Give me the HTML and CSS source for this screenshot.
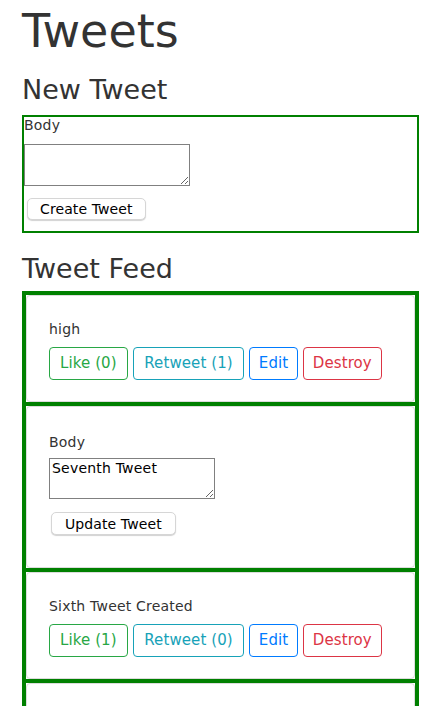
FILE: index.html
```html
<!DOCTYPE html>
<html lang="en">
<head>
<meta charset="utf-8">
<title>Tweets</title>
<link rel="stylesheet" href="styles.css">
</head>
<body>
<div class="container">
  <h1 class="title">Tweets</h1>
  <h3 class="subtitle">New Tweet</h3>
  <form class="new-form">
    <label class="new-label">Body</label>
    <textarea class="field"></textarea>
    <div class="actions"><button type="button" class="plain-btn">Create Tweet</button></div>
  </form>

  <h3 class="subtitle feed-title">Tweet Feed</h3>
  <div class="feed">
    <div class="tweet">
      <div class="card">
        <p class="tweet-text">high</p>
        <div class="btn-row">
          <button type="button" class="btn btn-like">Like (0)</button>
          <button type="button" class="btn btn-retweet">Retweet (1)</button>
          <button type="button" class="btn btn-edit">Edit</button>
          <button type="button" class="btn btn-destroy">Destroy</button>
        </div>
      </div>
    </div>
    <div class="tweet">
      <div class="card">
        <form class="edit-form">
          <label class="edit-label">Body</label>
          <textarea class="field">Seventh Tweet</textarea>
          <div class="edit-actions"><button type="button" class="plain-btn update">Update Tweet</button></div>
        </form>
      </div>
    </div>
    <div class="tweet">
      <div class="card">
        <p class="tweet-text">Sixth Tweet Created</p>
        <div class="btn-row">
          <button type="button" class="btn btn-like">Like (1)</button>
          <button type="button" class="btn btn-retweet">Retweet (0)</button>
          <button type="button" class="btn btn-edit">Edit</button>
          <button type="button" class="btn btn-destroy">Destroy</button>
        </div>
      </div>
    </div>
    <div class="tweet">
      <div class="card card-empty"></div>
    </div>
  </div>
</div>
</body>
</html>
```

FILE: styles.css
```css
html, body {
  margin: 0;
  padding: 0;
  background: #fff;
}
body {
  font-family: "DejaVu Sans", Verdana, sans-serif;
  font-size: 14px;
  letter-spacing: 0.2px;
  color: #333;
}
.container {
  padding: 6px 23px 0 22px;
}
.title {
  margin: 0 0 18px;
  font-size: 46px;
  line-height: 50px;
  letter-spacing: 0;
  font-weight: normal;
  color: #333;
}
.subtitle {
  margin: 0 0 10px;
  font-size: 27px;
  line-height: 31px;
  letter-spacing: 0;
  font-weight: normal;
  color: #333;
}
.feed-title {
  margin-top: 20px;
  margin-bottom: 7px;
}
.new-form {
  border: 2px solid #008000;
  margin: 0;
}
.new-label {
  display: block;
  line-height: 17px;
  margin-bottom: 10px;
}
.field {
  display: block;
  box-sizing: border-box;
  width: 166px;
  height: 42px;
  margin: 0;
  padding: 1px 2px;
  border: 1px solid #808080;
  font-family: "DejaVu Sans", Verdana, sans-serif;
  font-size: 14px;
  letter-spacing: 0.2px;
  line-height: 17px;
  color: #000;
  background: #fff;
}
.actions {
  padding: 12px 0 11px 3px;
}
.plain-btn {
  display: block;
  box-sizing: border-box;
  height: 22px;
  padding: 0 12px;
  border: 1px solid #d6d6d6;
  border-radius: 5px;
  background: #fff;
  box-shadow: 0 1px 1px rgba(0, 0, 0, 0.18);
  font-family: "DejaVu Sans", Verdana, sans-serif;
  font-size: 14px;
  letter-spacing: 0.1px;
  line-height: 18px;
  color: #000;
}
.plain-btn.update {
  height: 23px;
  padding: 0 13px;
}
.feed {
  border: 4px solid #008000;
}
.tweet + .tweet {
  border-top: 4px solid #008000;
}
.card {
  border: 1px solid #dcdcdc;
  border-radius: 4px;
  padding: 21px 21px 21px 22px;
  background: #fff;
}
.card-empty {
  height: 64px;
}
.tweet-text {
  margin: 0 0 6px;
  line-height: 24px;
}
.btn-row {
  display: flex;
  gap: 5px;
}
.btn {
  box-sizing: border-box;
  height: 33px;
  padding: 0 10px;
  border: 1px solid;
  border-radius: 4px;
  background: transparent;
  font-family: "DejaVu Sans", Verdana, sans-serif;
  font-size: 15px;
  letter-spacing: 0.1px;
  line-height: 31px;
}
.btn-like { color: #28a745; border-color: #28a745; }
.btn-retweet { color: #17a2b8; border-color: #17a2b8; padding: 0 10.5px; }
.btn-edit { color: #007bff; border-color: #007bff; padding: 0 8.5px; }
.btn-destroy { color: #dc3545; border-color: #dc3545; padding: 0 9px; }
.edit-form {
  margin: 0;
}
.edit-label {
  display: block;
  margin-top: 2px;
  margin-bottom: 4px;
  line-height: 24px;
}
.edit-form .field {
  height: 41px;
}
.edit-actions {
  padding: 13px 0 11px 2px;
}
```
